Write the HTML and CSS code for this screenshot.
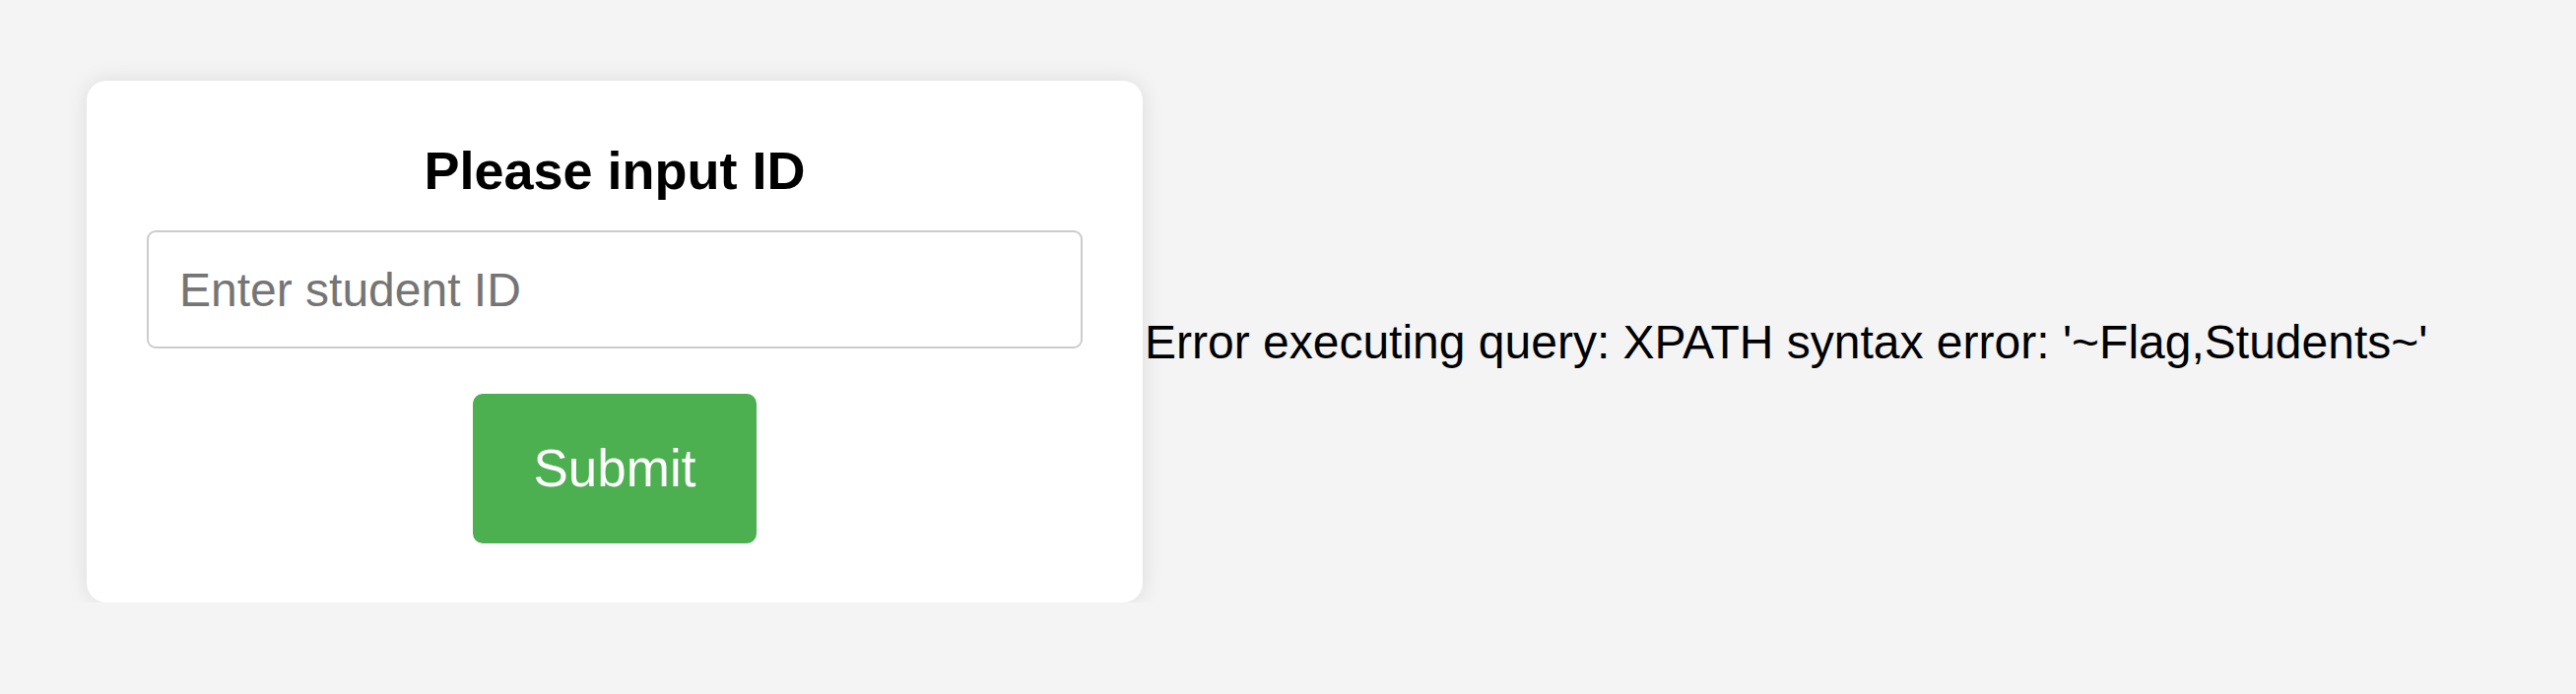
FILE: index.html
```html
<!DOCTYPE html>
<html lang="en">
<head>
<meta charset="utf-8">
<title>Student Query</title>
<link rel="stylesheet" href="styles.css">
</head>
<body>
<main class="page">
  <div class="card">
    <h2 class="title">Please input ID</h2>
    <form class="form">
      <input class="field" type="text" placeholder="Enter student ID">
      <button class="submit" type="button">Submit</button>
    </form>
  </div>
  <div class="result">Error executing query: XPATH syntax error: '~Flag,Students~'</div>
</main>
</body>
</html>
```
FILE: styles.css
```css
html, body {
  margin: 0;
  background: #f4f4f4;
}
body {
  font-family: "Liberation Sans", Arial, sans-serif;
  padding: 82px 0 0 88px;
}
.page {
  display: flex;
  align-items: center;
}
.card {
  background: #ffffff;
  width: 1072px;
  flex: none;
  box-sizing: border-box;
  padding: 61px 61px 60px;
  border-radius: 20px;
  box-shadow: 0 0 22px rgba(0, 0, 0, 0.1);
  display: flex;
  flex-direction: column;
  align-items: center;
}
.title {
  margin: 0;
  font-size: 54px;
  font-weight: bold;
  line-height: 61px;
  color: #000;
}
.form {
  display: flex;
  flex-direction: column;
  align-items: center;
  width: 100%;
  margin: 30px 0 0;
}
.field {
  width: 100%;
  height: 120px;
  box-sizing: border-box;
  border: 2px solid #cccccc;
  border-radius: 9px;
  padding: 0 31px;
  font-family: "Liberation Sans", Arial, sans-serif;
  font-size: 48px;
  color: #000;
  outline: none;
}
.field::placeholder {
  color: #757575;
}
.submit {
  margin-top: 46px;
  background: #4caf50;
  color: #ffffff;
  border: none;
  border-radius: 10px;
  width: 288px;
  height: 152px;
  padding: 0;
  font-family: "Liberation Sans", Arial, sans-serif;
  font-size: 53px;
  line-height: 62px;
}
.result {
  font-size: 48px;
  color: #000;
  margin-left: 2px;
}
```
